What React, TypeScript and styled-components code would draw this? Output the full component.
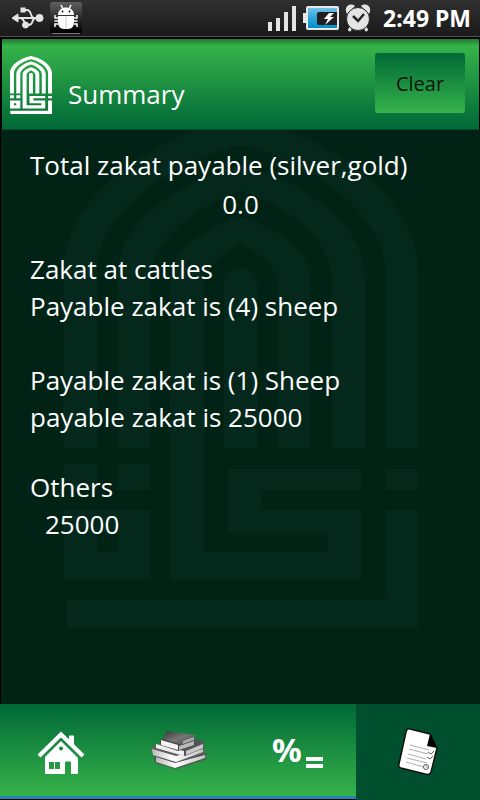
import React from "react";
import styled, { createGlobalStyle } from "styled-components";

const GlobalStyle = createGlobalStyle`
  * { box-sizing: border-box; }
  body {
    margin: 0;
    background: #000;
    color: #fff;
    font-family: "Open Sans", "Noto Sans", sans-serif;
  }
`;

const Screen = styled.div`
  display: flex;
  flex-direction: column;
  min-height: 100vh;
`;

const StatusBar = styled.div`
  display: flex;
  align-items: center;
  justify-content: space-between;
  height: 37px;
  padding: 0 9px 0 10px;
  background: linear-gradient(#303030, #1a1a1a);
  border-bottom: 1px solid #505050;
`;

const StatusGroup = styled.div`
  display: flex;
  align-items: center;
  gap: 6px;
`;

const Clock = styled.time`
  margin-left: 6px;
  font-family: "Noto Sans", sans-serif;
  font-size: 23px;
  line-height: 36px;
  font-weight: 700;
`;

const Header = styled.header`
  display: flex;
  align-items: flex-start;
  justify-content: space-between;
  height: 91px;
  margin: 2px 1px 0 2px;
  padding: 14px 14px 0 8px;
  background: linear-gradient(#1f7a30, #36b34a 7px, #006837);
  border-bottom: 1px solid #00502c;
  position: relative;
  z-index: 1;
`;

const Brand = styled.div`
  display: flex;
  align-items: flex-start;
  gap: 16px;
  padding-top: 3px;
`;

const Title = styled.h1`
  margin: 20px 0 0;
  font-size: 26px;
  line-height: 37px;
  font-weight: 400;
`;

const ClearButton = styled.button`
  width: 90px;
  height: 60px;
  padding: 0;
  border: 0;
  border-radius: 3px;
  background: linear-gradient(#006837, #36b34a);
  color: #06140a;
  font: 400 20px "Open Sans", sans-serif;
`;

const Content = styled.main`
  position: relative;
  flex: 1;
  overflow: hidden;
  margin-left: 1px;
  padding: 17px 29px 24px;
  background: #002315;
  font-size: 26px;
  line-height: 37px;
`;

const Watermark = styled.div`
  position: absolute;
  top: -13px;
  left: 0;
  right: 0;
  display: flex;
  justify-content: center;
`;

const Section = styled.section<{ $total?: boolean }>`
  position: relative;
  display: flex;
  flex-direction: column;
  gap: ${(p) => (p.$total ? "2px" : "0")};
  margin-bottom: ${(p) => (p.$total ? "28px" : "33px")};
`;

const Heading = styled.h2`
  margin: 0;
  font: inherit;
`;

const Line = styled.p<{ $align?: string; $indent?: boolean; $spaced?: boolean }>`
  margin: ${(p) => (p.$spaced ? "37px" : "0")} 0 0;
  padding-left: ${(p) => (p.$indent ? "15px" : "0")};
  text-align: ${(p) => p.$align || "left"};
`;

const TabBar = styled.nav`
  display: grid;
  grid-template-columns: 119fr 119fr 118fr 124fr;
  height: 96px;
`;

const Tab = styled.button<{ $active?: boolean }>`
  display: flex;
  align-items: center;
  justify-content: center;
  padding: 0;
  border: 0;
  border-bottom: ${(p) => (p.$active ? "0" : "3px solid #2682b4")};
  margin-bottom: ${(p) => (p.$active ? "0" : "1px")};
  background: ${(p) => (p.$active ? "#005030" : "linear-gradient(#006837, #36b34a)")};
`;

function Emblem({ width, height, color }: { width: number; height: number; color: string }) {
  return (
    <svg width={width} height={height} viewBox="64 117 354 511" preserveAspectRatio="none" fill={color} aria-hidden="true">
      <path d="M64 448V270C64 192 160 134 241 117C322 134 418 192 418 270V448H385V270C385 213 308 160 241 145C174 160 97 213 97 270V448Z" />
      <path d="M117 448V276C117 224 180 180 241 165C302 180 365 224 365 276V448H332V278C332 241 287 205 241 191C195 205 151 241 151 278V448Z" />
      <path d="M170 580V280C170 252 204 228 241 217C278 228 311 252 311 280V448H278V282C278 268 259 253 241 243C223 253 204 268 204 282V552H328V533H228V469H361V490H261V510H361V580Z" />
      <path d="M224 448V284C224 262 257 262 257 284V448Z" />
      <path d="M64 463H97V490H64ZM117 463H151V490H117ZM385 469H418V490H385Z" />
      <path fillRule="evenodd" d="M64 510H151V580H64ZM97 533V552H117V533Z" />
      <path d="M385 510H418V628H67V599H385Z" />
    </svg>
  );
}

function UsbIcon() {
  return (
    <svg width="34" height="24" viewBox="0 0 34 24" fill="#e4e4e4" stroke="#e4e4e4" aria-hidden="true">
      <path d="M2 12l6-4v8z" strokeWidth="1" />
      <path d="M7 12h20M10 12c5 0 3 7 9 7 5 0 2-7 7-7M13 4h4c5 0 3 8 7 8" fill="none" strokeWidth="1.800" />
      <rect x="11" y="2" width="4" height="4" />
      <circle cx="15.500" cy="19" r="3" />
      <circle cx="29.500" cy="12" r="3.600" />
    </svg>
  );
}

function BugIcon() {
  return (
    <svg width="32" height="32" viewBox="0 0 32 32" aria-hidden="true">
      <defs>
        <linearGradient id="bugTile" x2="0" y2="1">
          <stop stopColor="#606060" />
          <stop offset="0.85" stopColor="#080808" />
          <stop offset="1" stopColor="#000" />
        </linearGradient>
      </defs>
      <rect width="32" height="32" rx="3" fill="url(#bugTile)" />
      <path d="M2 31.500h28" stroke="#777" />
      <g fill="#fff" stroke="#fff">
        <path d="M8 13C8 3 24 3 24 13Z" stroke="none" />
        <path d="M8 14h16v6q0 7-6 7h-4q-6 0-6-7z" stroke="none" />
        <path d="M11 3l2 4M21 3l-2 4M8 16H5v-3M8 19H4.500M8 22H5v3M24 16h3v-3M24 19h3.500M24 22h3v3" fill="none" strokeWidth="1.500" />
      </g>
      <path d="M16 14v13" stroke="#ccc" />
      <circle cx="12.500" cy="9.500" r="0.900" />
      <circle cx="19.500" cy="9.500" r="0.900" />
    </svg>
  );
}

function SignalIcon() {
  return (
    <svg width="30" height="28" viewBox="0 0 30 28" fill="#e4e4e4" aria-hidden="true">
      <path d="M1 18h4v9H1zM9 14h4v13H9zM17 8h4v19h-4zM25 2h4v25h-4z" />
    </svg>
  );
}

function BatteryIcon() {
  return (
    <svg width="36" height="26" viewBox="0 0 36 26" aria-hidden="true">
      <defs>
        <linearGradient id="charge" x2="0" y2="1">
          <stop stopColor="#79c5e8" />
          <stop offset="0.45" stopColor="#35a8de" />
          <stop offset="1" stopColor="#008bc9" />
        </linearGradient>
      </defs>
      <path d="M0 8h4v10H0z" fill="#e8e8e8" />
      <rect x="4" y="2" width="31" height="22" rx="1" fill="url(#charge)" stroke="#e8e8e8" strokeWidth="2" />
      <path d="M14 9q0-2 2-2h18v13H16q-2 0-2-2z" fill="#202020" />
      <path d="M26 8l-5 6h4l-3 6 9-8h-4l4-4z" fill="#fff" />
    </svg>
  );
}

function AlarmIcon() {
  return (
    <svg width="26" height="28" viewBox="0 0 26 28" fill="#e4e4e4" stroke="#e4e4e4" aria-hidden="true">
      <path d="M2 10C-2 3 5-2 10 2zM24 10c4-7-3-12-8-8z" stroke="none" />
      <path d="M6 23l-2 4M20 23l2 4" strokeWidth="3" />
      <circle cx="13" cy="15" r="11.500" stroke="#252525" strokeWidth="1" />
      <path d="M8 12l5 5 6-7" fill="none" stroke="#252525" strokeWidth="2.500" />
    </svg>
  );
}

function HouseIcon() {
  return (
    <svg width="52" height="52" viewBox="0 1 52 52" fill="#fff" aria-hidden="true">
      <path d="M5 33L27 11.500L49 33" fill="none" stroke="#fff" strokeWidth="4.200" />
      <path d="M35 13.500q0-1 1-1h3q1 0 1 1V25l-5-5z" />
      <path fillRule="evenodd" d="M27 18L44 35V50q0 1-1 1H37V39.500q0-1-1-1h-4q-1 0-1 1V51H12q-1 0-1-1V34ZM27 23.500a2 2 0 1 0 .1 0ZM15 39v7h5v-7ZM21 39v7h5v-7Z" />
    </svg>
  );
}

function BooksIcon() {
  return (
    <svg width="60" height="44" viewBox="0 0 60 44" aria-hidden="true">
      <defs>
        <linearGradient id="cover" x2="1" y2="1">
          <stop stopColor="#333" />
          <stop offset="0.5" stopColor="#777" />
          <stop offset="1" stopColor="#444" />
        </linearGradient>
        <linearGradient id="pages" x2="1">
          <stop stopColor="#bbb" />
          <stop offset="0.4" stopColor="#fff" />
          <stop offset="1" stopColor="#c4c4c4" />
        </linearGradient>
      </defs>
      <path d="M5 29L34 20L59 26L56 28L58 31L27 41L6 35Z" fill="#555" />
      <path d="M7 29L26 35L56 27V30L26 40L7 34Z" fill="url(#pages)" />
      <path d="M2 19L28 12L56 21V25L29 34L4 27Z" fill="#606060" />
      <path d="M3 21L27 28L54 21V24L27 34L4 27Z" fill="url(#pages)" />
      <path d="M6 17L33 8L55 13V20L36 28L7 20Z" fill="#555" />
      <path d="M7 16L35 23V28L7 20Z" fill="#eee" />
      <path d="M37 23L54 16V20L37 27Z" fill="#ccc" />
      <path d="M11 12L22 8L46 13V17L29 23L11 17Z" fill="#444" />
      <path d="M12 12L29 17V22L12 17Z" fill="#f4f4f4" />
      <path d="M30 18L45 13V17L30 22Z" fill="#bbb" />
      <path d="M18 3L46 7L45 12L33 17L14 11L16 7Z" fill="url(#cover)" />
      <path d="M34 13L45 9V12L34 16Z" fill="#aaa" />
    </svg>
  );
}

function PercentIcon() {
  return (
    <svg width="60" height="56" viewBox="0 0 60 56" fill="#fff" fontFamily="Noto Sans" fontWeight="700" aria-hidden="true">
      <text x="5" y="40" fontSize="33">%</text>
      <path d="M39 35h17v4H39zM39 42h17v4H39z" />
    </svg>
  );
}

function DocumentIcon() {
  return (
    <svg width="44" height="52" viewBox="0 0 44 52" aria-hidden="true">
      <path d="M14 3L34 8L41 22L35 46Q34 49 31 48.500L5 42Q2 41 3 38L10 6Q11 2 14 3Z" fill="#fff" stroke="#111" strokeWidth="1.500" />
      <path d="M34 8L31 20L41 22Z" fill="#000" />
      <g fill="none" stroke="#999" strokeWidth="0.800">
        <path d="M14 19l19 5M13 23l19 5M12 28l18 5M11 32l20 5M10 36l18 5" />
        <path d="M32 26l3 2 3-3M31 31l3 2 3-3" stroke="#333" />
        <circle cx="30" cy="41" r="2.500" stroke="#333" />
        <path d="M30 39v2l2 1" />
      </g>
    </svg>
  );
}

export default function App() {
  return (
    <Screen>
      <GlobalStyle />
      <StatusBar>
        <StatusGroup>
          <UsbIcon />
          <BugIcon />
        </StatusGroup>
        <StatusGroup>
          <SignalIcon />
          <BatteryIcon />
          <AlarmIcon />
          <Clock>2:49 PM</Clock>
        </StatusGroup>
      </StatusBar>
      <Header>
        <Brand>
          <Emblem width={42} height={58} color="#fff" />
          <Title>Summary</Title>
        </Brand>
        <ClearButton type="button">Clear</ClearButton>
      </Header>
      <Content>
        <Watermark>
          <Emblem width={354} height={511} color="#05281d" />
        </Watermark>
        <Section $total>
          <Heading>Total zakat payable (silver,gold)</Heading>
          <Line $align="center">0.0</Line>
        </Section>
        <Section>
          <Heading>Zakat at cattles</Heading>
          <Line>Payable zakat is (4) sheep</Line>
          <Line $spaced>Payable zakat is (1) Sheep</Line>
          <Line>payable zakat is 25000</Line>
        </Section>
        <Section>
          <Heading>Others</Heading>
          <Line $indent>25000</Line>
        </Section>
      </Content>
      <TabBar aria-label="Sections">
        <Tab type="button" aria-label="Home"><HouseIcon /></Tab>
        <Tab type="button" aria-label="Library"><BooksIcon /></Tab>
        <Tab type="button" aria-label="Calculator"><PercentIcon /></Tab>
        <Tab type="button" aria-label="Summary" aria-current="page" $active><DocumentIcon /></Tab>
      </TabBar>
    </Screen>
  );
}
